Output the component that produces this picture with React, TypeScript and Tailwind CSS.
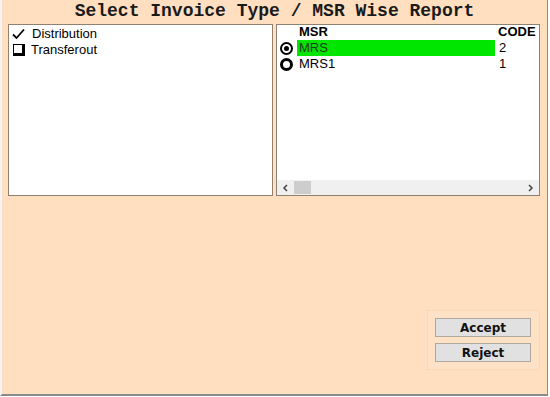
import React from "react";

export default function App() {
  return (
    <div className="w-[550px] h-[397px] bg-white overflow-hidden relative">
      <div className="absolute left-0 top-0 w-[548px] h-[396px] bg-[#ffdfbf] border-l-2 border-l-[#f4f4f4] border-r border-r-[#8a8a8a] border-b-2 border-b-[#8a8a8a] flex flex-col">
        <div className="h-[24px] flex items-start justify-center pt-[1px] font-['Liberation_Mono',monospace] font-bold text-[18px] leading-[21px] text-[#1a1a1a]">
          Select Invoice Type / MSR Wise Report
        </div>
        <div className="flex gap-[3px] pl-[6px]">
          <div className="w-[265px] h-[172px] bg-white border border-[#8f8070] font-['Liberation_Sans',sans-serif] text-[13px] leading-[16px] text-black pt-[1px] pl-[3px]">
            <div className="flex items-center gap-[7px] h-[16px]">
              <svg width="13" height="12" viewBox="0 0 13 12">
                <path d="M1 6.5 L4.5 10 L12 1.5" fill="none" stroke="#000" strokeWidth="1.8" />
              </svg>
              <span>Distribution</span>
            </div>
            <div className="flex items-center gap-[7px] h-[16px]">
              <div className="w-[12px] h-[12px] border border-black border-r-[3px] border-b-[3px] ml-[1px] mr-[-1px]"></div>
              <span>Transferout</span>
            </div>
          </div>
          <div className="w-[264px] h-[172px] bg-white border border-[#8f8070] font-['Liberation_Sans',sans-serif] text-[13px] leading-[16px] text-black flex flex-col overflow-hidden">
            <div className="flex-1 relative">
              <div className="flex h-[15px] items-end font-bold">
                <span className="ml-[22px] w-[200px]">MSR</span>
                <span className="ml-[-1px] whitespace-nowrap">CODE</span>
              </div>
              <div className="flex items-center h-[16px]">
                <div className="w-[20px] flex justify-start pl-[3px]">
                  <div className="w-[13px] h-[13px] rounded-full border-2 border-black flex items-center justify-center">
                    <div className="w-[5px] h-[5px] rounded-full bg-black"></div>
                  </div>
                </div>
                <div className="w-[198px] h-[16px] bg-[#00e600] pl-[2px] text-[#1d3a1d]">MRS</div>
                <span className="ml-[4px]">2</span>
              </div>
              <div className="flex items-center h-[16px]">
                <div className="w-[20px] flex justify-start pl-[3px]">
                  <div className="w-[13px] h-[13px] rounded-full border-[3px] border-black"></div>
                </div>
                <div className="w-[198px] h-[16px] pl-[2px]">MRS1</div>
                <span className="ml-[4px]">1</span>
              </div>
            </div>
            <div className="h-[15px] bg-[#f0f0f0] flex items-center text-[#555] text-[11px]">
              <span className="w-[17px] flex justify-center">
                <svg width="7" height="8" viewBox="0 0 7 8"><path d="M5 1 L2 4 L5 7" fill="none" stroke="#444" strokeWidth="1.5" /></svg>
              </span>
              <div className="w-[17px] h-[13px] bg-[#cdcdcd]"></div>
              <div className="flex-1"></div>
              <span className="w-[17px] flex justify-center">
                <svg width="7" height="8" viewBox="0 0 7 8"><path d="M2 1 L5 4 L2 7" fill="none" stroke="#444" strokeWidth="1.5" /></svg>
              </span>
            </div>
          </div>
        </div>
        <div className="flex-1 flex justify-end items-start pt-[114px] pr-[7px]">
          <div className="w-[113px] h-[60px] bg-[#ffe2c6] border border-[#f8d8b8] flex flex-col items-start pl-[7px] gap-[6px] pt-[7px]">
            <button className="w-[96px] h-[19px] bg-[#e1e1e1] border border-[#b0a8a0] font-['DejaVu_Sans',sans-serif] font-bold text-[12px] leading-[16px] text-[#111]">Accept</button>
            <button className="w-[96px] h-[19px] bg-[#e1e1e1] border border-[#b0a8a0] font-['DejaVu_Sans',sans-serif] font-bold text-[12px] leading-[16px] text-[#111]">Reject</button>
          </div>
        </div>
      </div>
    </div>
  );
}
